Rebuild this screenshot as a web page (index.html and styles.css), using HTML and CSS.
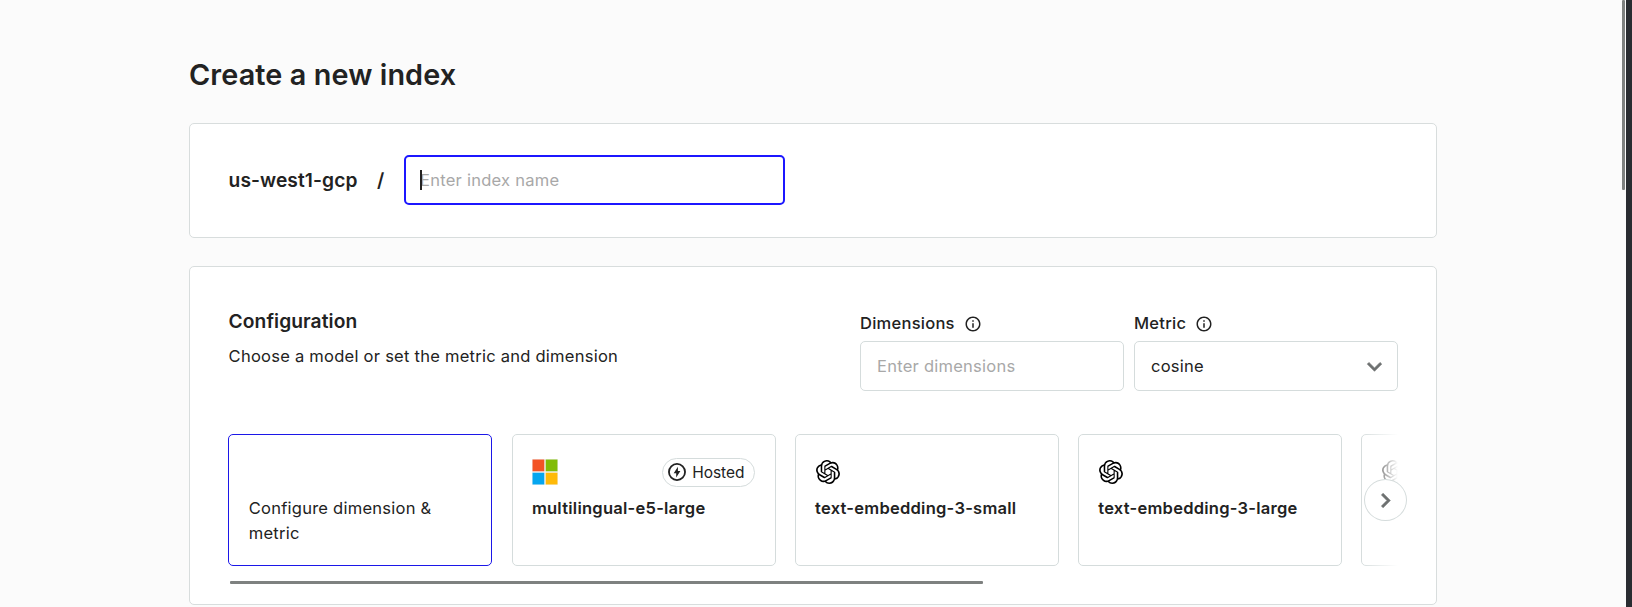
FILE: index.html
```html
<!DOCTYPE html>
<html lang="en">
<head>
<meta charset="utf-8">
<title>Create a new index</title>
<link rel="stylesheet" href="styles.css">
</head>
<body>
<svg class="defs" width="0" height="0">
  <symbol id="knot" viewBox="0 0 24 24"><path d="M22.2819 9.8211a5.9847 5.9847 0 0 0-.5157-4.9108 6.0462 6.0462 0 0 0-6.5098-2.9A6.0651 6.0651 0 0 0 4.9807 4.1818a5.9847 5.9847 0 0 0-3.9977 2.9 6.0462 6.0462 0 0 0 .7427 7.0966 5.98 5.98 0 0 0 .511 4.9107 6.051 6.051 0 0 0 6.5146 2.9001A5.9847 5.9847 0 0 0 13.2599 24a6.0557 6.0557 0 0 0 5.7718-4.2058 5.9894 5.9894 0 0 0 3.9977-2.9001 6.0557 6.0557 0 0 0-.7475-7.0729zm-9.022 12.6081a4.4755 4.4755 0 0 1-2.8764-1.0408l.1419-.0804 4.7783-2.7582a.7948.7948 0 0 0 .3927-.6813v-6.7369l2.02 1.1686a.071.071 0 0 1 .038.052v5.5826a4.504 4.504 0 0 1-4.4945 4.4944zm-9.6607-4.1254a4.4708 4.4708 0 0 1-.5346-3.0137l.142.0852 4.783 2.7582a.7712.7712 0 0 0 .7806 0l5.8428-3.3685v2.3324a.0804.0804 0 0 1-.0332.0615L9.74 19.9502a4.4992 4.4992 0 0 1-6.1408-1.6464zM2.3408 7.8956a4.485 4.485 0 0 1 2.3655-1.9728V11.6a.7664.7664 0 0 0 .3879.6765l5.8144 3.3543-2.0201 1.1685a.0757.0757 0 0 1-.071 0l-4.8303-2.7865A4.504 4.504 0 0 1 2.3408 7.872zm16.5963 3.8558L13.1038 8.364 15.1192 7.2a.0757.0757 0 0 1 .071 0l4.8303 2.7913a4.4944 4.4944 0 0 1-.6765 8.1042v-5.6772a.79.79 0 0 0-.407-.667zm2.0107-3.0231l-.142-.0852-4.7735-2.7818a.7759.7759 0 0 0-.7854 0L9.409 9.2297V6.8974a.0662.0662 0 0 1 .0284-.0615l4.8303-2.7866a4.4992 4.4992 0 0 1 6.6802 4.66zM8.3065 12.863l-2.02-1.1638a.0804.0804 0 0 1-.038-.0567V6.0742a4.4992 4.4992 0 0 1 7.3757-3.4537l-.142.0805L8.704 5.459a.7948.7948 0 0 0-.3927.6813zm1.0976-2.3654l2.602-1.4998 2.6069 1.4998v2.9994l-2.5974 1.4997-2.6067-1.4997Z"/></symbol>
  <symbol id="info" viewBox="0 0 24 24"><path d="M11 7h2v2h-2zm0 4h2v6h-2zm1-9C6.480 2 2 6.480 2 12s4.480 10 10 10 10-4.480 10-10S17.520 2 12 2zm0 18c-4.410 0-8-3.590-8-8s3.590-8 8-8 8 3.590 8 8-3.590 8-8 8z"/></symbol>
</svg>
<div class="app">
  <main class="page">
    <h1 class="title">Create a new index</h1>
    <section class="panel name-panel">
      <span class="env">us-west1-gcp</span>
      <span class="slash">/</span>
      <div class="field name-field"><span class="caret"></span><span class="placeholder">Enter index name</span></div>
    </section>
    <section class="panel config-panel">
      <div class="config-head">
        <div class="intro">
          <h2 class="heading">Configuration</h2>
          <p class="sub">Choose a model or set the metric and dimension</p>
        </div>
        <div class="controls">
          <div class="control">
            <div class="label">Dimensions <svg class="info"><use href="#info"/></svg></div>
            <div class="field boxed"><span class="placeholder">Enter dimensions</span></div>
          </div>
          <div class="control">
            <div class="label">Metric <svg class="info"><use href="#info"/></svg></div>
            <div class="field boxed select"><span>cosine</span><svg class="chevron" viewBox="0 0 24 24"><path d="M7.410 8.590 12 13.170l4.590-4.580L18 10l-6 6-6-6z"/></svg></div>
          </div>
        </div>
      </div>
      <div class="carousel">
        <div class="cards">
          <article class="card selected"><div class="card-top"></div><div class="desc">Configure dimension &amp; metric</div></article>
          <article class="card">
            <div class="card-top">
              <svg class="ms" viewBox="0 0 26 26"><path fill="#f3f3f3" d="M0 0h26v26H0z"/><path fill="#f35325" d="M.5.5h11.800v11.800H.5z"/><path fill="#81bc06" d="M13.700.5h11.800v11.800H13.700z"/><path fill="#05a6f0" d="M.5 13.700h11.800v11.800H.5z"/><path fill="#ffba08" d="M13.700 13.700h11.800v11.800H13.700z"/></svg>
              <span class="pill"><svg class="bolt" viewBox="0 0 18 18"><circle cx="9" cy="9" r="8.050" fill="none" stroke="#222" stroke-width="1.800"/><path d="M9.900 3.700 5.700 10.200h2.500v4.300l4.200-6.400H9.900z"/></svg>Hosted</span>
            </div>
            <div class="model">multilingual-e5-large</div>
          </article>
          <article class="card"><div class="card-top"><svg class="knot"><use href="#knot"/></svg></div><div class="model">text-embedding-3-small</div></article>
          <article class="card"><div class="card-top"><svg class="knot"><use href="#knot"/></svg></div><div class="model">text-embedding-3-large</div></article>
          <article class="card"><div class="card-top"><svg class="knot"><use href="#knot"/></svg></div></article>
          <div class="fade"></div>
        </div>
        <div class="next"><svg class="chevron" viewBox="0 0 24 24"><path d="M10 6 8.590 7.410 13.170 12l-4.580 4.590L10 18l6-6z"/></svg></div>
        <div class="track"></div>
      </div>
    </section>
  </main>
  <div class="scrollbar"><div class="thumb"></div></div>
  <div class="edge"></div>
</div>
</body>
</html>
```
FILE: styles.css
```css
* { box-sizing: border-box; }
body { margin: 0; background: #fbfbfb; color: #222; font: 400 16.550px/25px Inter, sans-serif; letter-spacing: 0.240px; overflow: hidden; }
h1, h2, p { margin: 0; }
svg { display: block; flex: none; fill: #222; }
.defs { position: absolute; }
.app { display: flex; height: 607px; overflow: hidden; }
.page { flex: 1; padding: 57px 185px 0 189px; }
.title { font-size: 28.800px; line-height: 36px; font-weight: 600; letter-spacing: 0.100px; height: 66px; }
.panel { width: 1248px; background: #fff; border: 1px solid #d8dddd; border-radius: 5px; }
.name-panel { height: 115px; display: flex; align-items: flex-start; padding: 31px 38.600px 0; margin-bottom: 28px; }
.env, .slash { font-size: 19.200px; line-height: 50px; font-weight: 600; letter-spacing: 0.080px; }
.env { width: 148.500px; }
.slash { width: 26.900px; }
.field { height: 50px; border: 1px solid #d5dcdc; border-radius: 5px; padding: 0 16px; display: flex; align-items: center; background: #fff; }
.boxed { padding-top: 1px; }
.name-field { width: 381px; border: 2px solid #1c17ff; padding: 0 14px; position: relative; }
.caret { position: absolute; left: 14px; top: 13px; width: 2px; height: 20px; background: #222; }
.placeholder { color: #a8a8a8; }
.config-panel { height: 339px; padding: 41px 38px 0; }
.config-head { display: flex; justify-content: space-between; height: 126px; }
.intro { padding-left: 0.600px; }
.heading { font-size: 19.200px; line-height: 26px; font-weight: 600; letter-spacing: 0.080px; margin-bottom: 10px; }
.controls { display: flex; gap: 10px; padding-top: 3px; }
.control { width: 264px; }
.label { height: 30px; display: flex; align-items: flex-start; gap: 9px; font-weight: 500; }
.info { width: 18px; height: 18px; margin-top: 4px; }
.select { justify-content: space-between; padding-right: 8px; }
.chevron { width: 29px; height: 29px; fill: #6d7070; stroke: #6d7070; stroke-width: 0.500; }
.carousel { position: relative; }
.cards { position: relative; width: 1170px; padding-left: 0.400px; display: flex; gap: 19.200px; overflow: hidden; }
.card { flex: none; width: 264px; height: 132px; padding: 21px 20px 0 19.300px; border: 1px solid #d5dcdc; border-radius: 5px; background: #fff; }
.selected { border-color: #1c17e8; }
.card-top { height: 32px; margin-bottom: 8px; display: flex; align-items: center; justify-content: space-between; }
.model { font-weight: 600; }
.ms { width: 26px; height: 26px; }
.knot { width: 24px; height: 24px; margin-left: 1px; fill: #000; }
.pill { height: 29px; border: 1px solid #d5dcdc; border-radius: 15px; padding: 0 9px 0 5px; display: flex; align-items: center; gap: 6px; font-size: 15.500px; letter-spacing: 0; }
.bolt { width: 18px; height: 18px; }
.fade { position: absolute; right: 0; top: 0; width: 38px; height: 132px; background: linear-gradient(90deg, rgba(255,255,255,0), #fff); }
.next { position: absolute; left: 1136px; top: 45px; width: 43px; height: 42px; border: 1px solid #d5dcdc; border-radius: 50%; background: #fff; display: flex; align-items: center; justify-content: center; padding-right: 1px; }
.track { width: 753px; height: 3px; margin: 15px 0 0 2px; background: #7e8180; border-radius: 1px; }
.scrollbar { width: 4px; }
.thumb { width: 3px; height: 190px; background: #7e8180; border-radius: 1px; }
.edge { width: 6px; background: #292c31; }
```
